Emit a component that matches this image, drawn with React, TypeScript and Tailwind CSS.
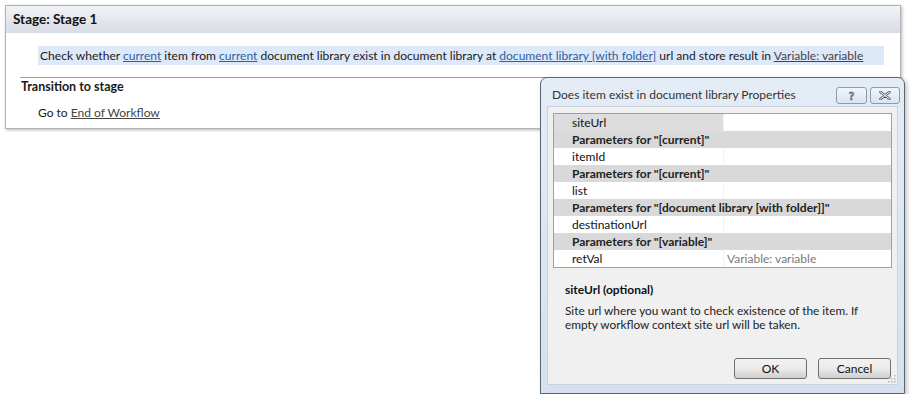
import React from "react";

const rows: { name: string; value?: string; section?: boolean; selected?: boolean }[] = [
  { name: "siteUrl", selected: true },
  { name: 'Parameters for "[current]"', section: true },
  { name: "itemId" },
  { name: 'Parameters for "[current]"', section: true },
  { name: "list" },
  { name: 'Parameters for "[document library [with folder]]"', section: true },
  { name: "destinationUrl" },
  { name: 'Parameters for "[variable]"', section: true },
  { name: "retVal", value: "Variable: variable" },
];

function PropertyGrid() {
  return (
    <div className="border border-[#a0a0a0] bg-white">
      {rows.map((r, i) =>
        r.section ? (
          <div
            key={i}
            className="h-[17px] bg-[#d9d9d9] pl-[18px] text-[12px] leading-[17px] font-bold text-[#222]"
          >
            {r.name}
          </div>
        ) : (
          <div key={i} className="flex h-[17px] text-[12px] leading-[17px]">
            <div
              className={`w-[170px] pl-[18px] border-r border-[#f3f3f3] ${
                r.selected ? "bg-[#dddde0]" : "bg-white"
              } text-[#111]`}
            >
              {r.name}
            </div>
            <div className="flex-1 pl-[3px] text-[#7a7a7a]">{r.value}</div>
          </div>
        )
      )}
    </div>
  );
}

function PropertiesDialog() {
  return (
    <div className="absolute left-[540px] top-[77px] w-[365px] h-[317px] rounded-t-[7px] border border-[#5d6670] bg-gradient-to-b from-[#e4ecf6] to-[#d5e1ef] shadow-[2px_2px_4px_rgba(0,0,0,0.25)] flex flex-col px-[6px] pb-[8px]">
      {/* Title bar */}
      <div className="h-[28px] flex items-center justify-between pl-[5px]">
        <span className="text-[12px] text-[#333] pt-[6px]">
          Does item exist in document library Properties
        </span>
        <div className="flex gap-[3px] pt-[7px] -mr-[2px]">
          <button className="w-[31px] h-[17px] rounded-[3px] border border-[#8a9bb0] bg-gradient-to-b from-[#f2f6fb] to-[#dae4f0] flex items-center justify-center">
            <span className="text-[12px] leading-none font-bold text-white [-webkit-text-stroke:0.8px_#55606c]">?</span>
          </button>
          <button className="w-[30px] h-[17px] rounded-[3px] border border-[#8a9bb0] bg-gradient-to-b from-[#f2f6fb] to-[#dae4f0] flex items-center justify-center">
            <svg width="12" height="9" viewBox="0 0 12 9">
              <path d="M1.5 1 L10.5 8 M10.5 1 L1.5 8" stroke="#55606c" strokeWidth="2.6" strokeLinecap="round" />
              <path d="M1.5 1 L10.5 8 M10.5 1 L1.5 8" stroke="#ffffff" strokeWidth="1" strokeLinecap="round" />
            </svg>
          </button>
        </div>
      </div>

      {/* Content */}
      <div className="relative flex-1 bg-[#f0f0f0] border border-[#c9d3de] px-[5px] pt-[6px] flex flex-col">
        <PropertyGrid />
        <div className="mt-[14px] pl-[12px] text-[12px] font-bold text-[#111] leading-[15px]">
          siteUrl (optional)
        </div>
        <div className="mt-[7px] pl-[12px] text-[11.8px] text-[#222] leading-[14px] whitespace-nowrap">
          Site url where you want to check existence of the item. If
          <br />
          empty workflow context site url will be taken.
        </div>
        <div className="mt-auto mb-[5px] flex justify-end gap-[11px] pr-[1px]">
          <button className="w-[73px] h-[21px] rounded-[3px] border border-[#707070] bg-gradient-to-b from-[#f2f2f2] via-[#ebebeb] to-[#cfcfcf] text-[12px] text-[#111]">
            OK
          </button>
          <button className="w-[73px] h-[21px] rounded-[3px] border border-[#707070] bg-gradient-to-b from-[#f2f2f2] via-[#ebebeb] to-[#cfcfcf] text-[12px] text-[#111]">
            Cancel
          </button>
        </div>
        {/* resize grip */}
        <svg className="absolute right-[1px] bottom-[1px]" width="8" height="8" viewBox="0 0 8 8">
          {[
            [6, 0],
            [6, 3],
            [3, 3],
            [6, 6],
            [3, 6],
            [0, 6],
          ].map(([x, y], i) => (
            <rect key={i} x={x} y={y} width="1.5" height="1.5" fill="#b8b8b8" />
          ))}
        </svg>
      </div>
    </div>
  );
}

export default function App() {
  return (
    <div className="relative w-[911px] h-[394px] bg-white overflow-hidden font-['Lato',sans-serif] text-[12px] text-[#1a1a1a]">
      <div className="pl-[5px] pt-[5px]">
        <div className="w-[896px] h-[124px] border border-[#b4b4b4] bg-white shadow-[1px_1px_3px_rgba(0,0,0,0.3)]">
          {/* Stage header */}
          <div className="h-[27px] bg-gradient-to-b from-[#f1f3f6] to-[#d7dce4] pl-[7px] flex items-center">
            <span className="text-[13.5px] font-bold text-[#111]">Stage: Stage 1</span>
          </div>

          {/* Action row */}
          <div className="mt-[13px] ml-[32px] mr-[16px] h-[19px] bg-[#dde8f8] pl-[2px] text-[12.05px] leading-[19px] whitespace-nowrap">
            Check whether <a className="underline text-[#2e5fa3]">current</a> item from{" "}
            <a className="underline text-[#2e5fa3]">current</a> document library exist in document
            library at <a className="underline text-[#2e5fa3]">document library [with folder]</a> url
            and store result in <a className="underline text-[#444]">Variable: variable</a>
          </div>

          {/* Transition */}
          <div className="mt-[12px] ml-[14px] border-t border-[#a0a0a0]">
            <div className="pt-[1px] pl-[1px] text-[12.5px] font-bold leading-[15px]">Transition to stage</div>
            <div className="mt-[11px] pl-[18px] leading-[15px]">
              Go to <a className="underline text-[#444]">End of Workflow</a>
            </div>
          </div>
        </div>
      </div>

      <PropertiesDialog />
    </div>
  );
}
